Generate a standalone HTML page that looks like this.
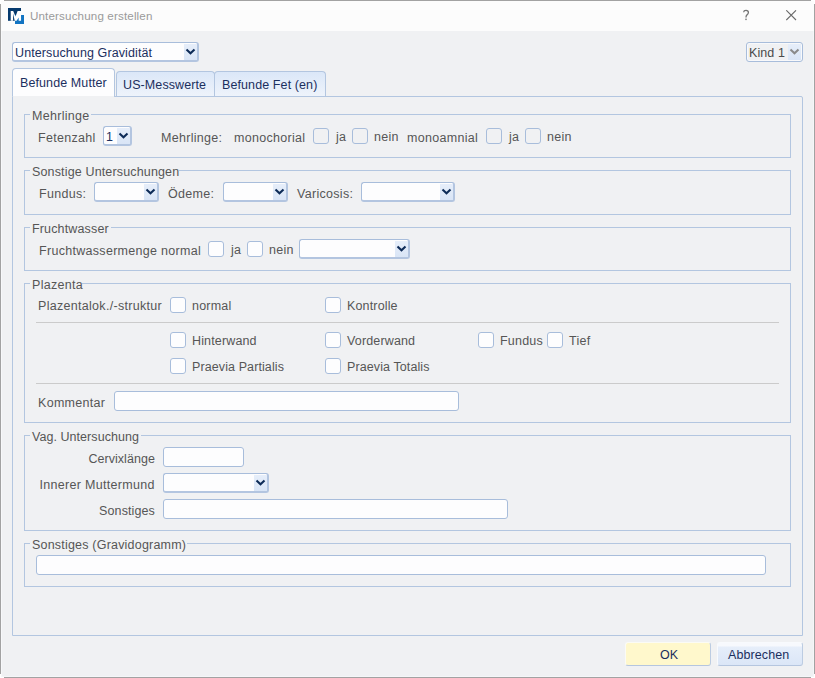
<!DOCTYPE html>
<html><head><meta charset="utf-8"><style>
html,body{margin:0;padding:0;}
body{width:815px;height:678px;position:relative;overflow:hidden;background:#ffffff;font-family:"Liberation Sans",sans-serif;}
.t{position:absolute;white-space:nowrap;line-height:15px;}
</style></head><body>
<div style="position:absolute;left:4px;top:0;width:807px;height:1px;background:#a2a2a2"></div>
<div style="position:absolute;left:4px;top:677px;width:807px;height:1px;background:#a2a2a2"></div>
<div style="position:absolute;left:0;top:4px;width:1px;height:670px;background:#a2a2a2"></div>
<div style="position:absolute;left:814px;top:4px;width:1px;height:670px;background:#a2a2a2"></div>
<div style="position:absolute;left:1px;top:1px;width:813px;height:30px;box-sizing:border-box;background:#fcfcfc;"></div>
<div style="position:absolute;left:1px;top:31px;width:813px;height:646px;box-sizing:border-box;background:#f0f1f3;box-shadow:inset 1px 0 #f7f8fa, inset -1px 0 #f5f6f8, inset 0 -1px #f5f6f8;"></div>
<svg style="position:absolute;left:8px;top:8px" width="17" height="17" viewBox="0 0 17 17">
<rect x="0" y="0" width="13" height="12.8" fill="#063a6e"/>
<rect x="7" y="7" width="9" height="9" fill="#1274c2"/>
<polygon points="2.72,12.75 2.72,3.01 5.2,3.01 7.5,8.6 9.6,3.01 13.04,3.01 13.04,12.75 10.68,12.75 10.68,9.6 8.6,12.75 6.7,12.75 5.08,5.6 5.08,12.75" fill="#ffffff"/>
</svg>
<div class="t" style="left:30px;top:7.94px;font-size:11.6px;color:#9a9a9a;letter-spacing:0.15px;">Untersuchung erstellen</div>
<svg style="position:absolute;left:740px;top:8px" width="12" height="14"><path d="M3.6 4.2 Q3.8 2.4 6 2.4 Q8.4 2.4 8.4 4.6 Q8.4 6 7 6.9 Q6 7.6 6 9.2 V9.6" fill="none" stroke="#747474" stroke-width="1.3"/><rect x="5.3" y="10.6" width="1.4" height="1.5" fill="#747474"/></svg>
<svg style="position:absolute;left:786px;top:10px" width="11" height="11"><path d="M0.3 0.3 L10 10 M10 0.3 L0.3 10" stroke="#6a6a6a" stroke-width="1.1"/></svg>
<div style="position:absolute;left:12px;top:42px;width:187px;height:20px;box-sizing:border-box;border:1px solid #a8bddb;border-right:2px solid #b3c5e0;border-bottom:2px solid #b3c5e0;border-radius:3px;background:#fdfdfe;"></div>
<div style="position:absolute;left:184px;top:44px;width:13px;height:16px;box-sizing:border-box;background:linear-gradient(#e6eefa,#d9e5f6);"></div>
<svg style="position:absolute;left:185px;top:48px" width="11" height="7.2"><path d="M1.5 1.5 L5.5 5.2 L9.5 1.5" fill="none" stroke="#0d2b57" stroke-width="2.1" stroke-linecap="butt" stroke-linejoin="miter"/></svg>
<div class="t" style="left:15px;top:46.28px;font-size:12.5px;color:#1b2f5e;letter-spacing:0.1px;">Untersuchung Gravidität</div>
<div style="position:absolute;left:746px;top:42px;width:57px;height:20px;box-sizing:border-box;border:1px solid #a8bddb;border-radius:3px;background:#f0f1f3;box-shadow:inset 0 0 0 1px #f8f9fb;"></div>
<div style="position:absolute;left:788px;top:44px;width:13px;height:16px;box-sizing:border-box;background:linear-gradient(#e6eefa,#d9e5f6);"></div>
<svg style="position:absolute;left:789px;top:48px" width="11" height="7.2"><path d="M1.5 1.5 L5.5 5.2 L9.5 1.5" fill="none" stroke="#8a8a8a" stroke-width="2.1" stroke-linecap="butt" stroke-linejoin="miter"/></svg>
<div class="t" style="left:749px;top:46.28px;font-size:12.5px;color:#4a4a4a;letter-spacing:0.1px;">Kind 1</div>
<div style="position:absolute;left:12px;top:96px;width:791px;height:540px;box-sizing:border-box;border:1px solid #b3c6e0;border-top-right-radius:2px;background:#f0f1f3;"></div>
<div style="position:absolute;left:116px;top:71px;width:99px;height:25px;box-sizing:border-box;border:1px solid #b3c6e0;border-bottom:none;border-radius:4px 4px 0 0;background:linear-gradient(#dbe7f8,#eef3fb)"></div>
<div style="position:absolute;left:214px;top:71px;width:112px;height:25px;box-sizing:border-box;border:1px solid #b3c6e0;border-bottom:none;border-radius:4px 4px 0 0;background:linear-gradient(#dbe7f8,#eef3fb)"></div>
<div style="position:absolute;left:12px;top:68px;width:103px;height:28px;box-sizing:border-box;border:1px solid #b3c6e0;border-bottom:none;border-radius:4px 4px 0 0;background:#fdfdfe"></div>
<div style="position:absolute;left:13px;top:96px;width:101px;height:1px;box-sizing:border-box;background:#f0f1f3;"></div>
<div class="t" style="left:20px;top:76.28px;font-size:12.5px;color:#1b2f5e;letter-spacing:0.1px;">Befunde Mutter</div>
<div class="t" style="left:123px;top:78.28px;font-size:12.5px;color:#1b2f5e;letter-spacing:0.1px;">US-Messwerte</div>
<div class="t" style="left:222px;top:78.28px;font-size:12.5px;color:#1b2f5e;letter-spacing:0.1px;">Befunde Fet (en)</div>
<div style="position:absolute;left:24px;top:114px;width:767px;height:44px;box-sizing:border-box;border:1px solid #b3c6e0;"></div>
<div style="position:absolute;left:30px;top:114px;width:61px;height:1px;box-sizing:border-box;background:#f0f1f3;"></div>
<div class="t" style="left:32px;top:109.28px;font-size:12.5px;color:#565656;letter-spacing:0.3px;">Mehrlinge</div>
<div class="t" style="left:38px;top:131.28px;font-size:12.5px;color:#565656;letter-spacing:0.3px;">Fetenzahl</div>
<div style="position:absolute;left:103px;top:126px;width:29px;height:20px;box-sizing:border-box;border:1px solid #a8bddb;border-right:2px solid #b3c5e0;border-bottom:2px solid #b3c5e0;border-radius:3px;background:#fdfdfe;"></div>
<div style="position:absolute;left:117px;top:128px;width:13px;height:16px;box-sizing:border-box;background:linear-gradient(#e6eefa,#d9e5f6);"></div>
<svg style="position:absolute;left:118px;top:132px" width="11" height="7.2"><path d="M1.5 1.5 L5.5 5.2 L9.5 1.5" fill="none" stroke="#0d2b57" stroke-width="2.1" stroke-linecap="butt" stroke-linejoin="miter"/></svg>
<div class="t" style="left:106px;top:130.28px;font-size:12.5px;color:#1b2f5e;letter-spacing:0.1px;">1</div>
<div class="t" style="left:161px;top:131.28px;font-size:12.5px;color:#565656;letter-spacing:0.3px;">Mehrlinge:</div>
<div class="t" style="left:234px;top:131.28px;font-size:12.5px;color:#565656;letter-spacing:0.3px;">monochorial</div>
<div style="position:absolute;left:313px;top:128px;width:16px;height:16px;box-sizing:border-box;border:1px solid #a8bddb;border-radius:3px;background:transparent;"></div>
<div class="t" style="left:336px;top:130.28px;font-size:12.5px;color:#565656;letter-spacing:0.3px;">ja</div>
<div style="position:absolute;left:352px;top:128px;width:16px;height:16px;box-sizing:border-box;border:1px solid #a8bddb;border-radius:3px;background:transparent;"></div>
<div class="t" style="left:374px;top:130.28px;font-size:12.5px;color:#565656;letter-spacing:0.3px;">nein</div>
<div class="t" style="left:407px;top:131.28px;font-size:12.5px;color:#565656;letter-spacing:0.3px;">monoamnial</div>
<div style="position:absolute;left:486px;top:128px;width:16px;height:16px;box-sizing:border-box;border:1px solid #a8bddb;border-radius:3px;background:transparent;"></div>
<div class="t" style="left:509px;top:130.28px;font-size:12.5px;color:#565656;letter-spacing:0.3px;">ja</div>
<div style="position:absolute;left:525px;top:128px;width:16px;height:16px;box-sizing:border-box;border:1px solid #a8bddb;border-radius:3px;background:transparent;"></div>
<div class="t" style="left:547px;top:130.28px;font-size:12.5px;color:#565656;letter-spacing:0.3px;">nein</div>
<div style="position:absolute;left:24px;top:170px;width:767px;height:45px;box-sizing:border-box;border:1px solid #b3c6e0;"></div>
<div style="position:absolute;left:30px;top:170px;width:149px;height:1px;box-sizing:border-box;background:#f0f1f3;"></div>
<div class="t" style="left:32px;top:165.28px;font-size:12.5px;color:#565656;letter-spacing:0.15px;">Sonstige Untersuchungen</div>
<div class="t" style="left:39px;top:187.28px;font-size:12.5px;color:#565656;letter-spacing:0.3px;">Fundus:</div>
<div style="position:absolute;left:94px;top:182px;width:65px;height:20px;box-sizing:border-box;border:1px solid #a8bddb;border-right:2px solid #b3c5e0;border-bottom:2px solid #b3c5e0;border-radius:3px;background:#fdfdfe;"></div>
<div style="position:absolute;left:144px;top:184px;width:13px;height:16px;box-sizing:border-box;background:linear-gradient(#e6eefa,#d9e5f6);"></div>
<svg style="position:absolute;left:145px;top:188px" width="11" height="7.2"><path d="M1.5 1.5 L5.5 5.2 L9.5 1.5" fill="none" stroke="#0d2b57" stroke-width="2.1" stroke-linecap="butt" stroke-linejoin="miter"/></svg>
<div class="t" style="left:168px;top:187.28px;font-size:12.5px;color:#565656;letter-spacing:0.3px;">Ödeme:</div>
<div style="position:absolute;left:223px;top:182px;width:65px;height:20px;box-sizing:border-box;border:1px solid #a8bddb;border-right:2px solid #b3c5e0;border-bottom:2px solid #b3c5e0;border-radius:3px;background:#fdfdfe;"></div>
<div style="position:absolute;left:273px;top:184px;width:13px;height:16px;box-sizing:border-box;background:linear-gradient(#e6eefa,#d9e5f6);"></div>
<svg style="position:absolute;left:274px;top:188px" width="11" height="7.2"><path d="M1.5 1.5 L5.5 5.2 L9.5 1.5" fill="none" stroke="#0d2b57" stroke-width="2.1" stroke-linecap="butt" stroke-linejoin="miter"/></svg>
<div class="t" style="left:297px;top:187.28px;font-size:12.5px;color:#565656;letter-spacing:0.3px;">Varicosis:</div>
<div style="position:absolute;left:361px;top:182px;width:94px;height:20px;box-sizing:border-box;border:1px solid #a8bddb;border-right:2px solid #b3c5e0;border-bottom:2px solid #b3c5e0;border-radius:3px;background:#fdfdfe;"></div>
<div style="position:absolute;left:440px;top:184px;width:13px;height:16px;box-sizing:border-box;background:linear-gradient(#e6eefa,#d9e5f6);"></div>
<svg style="position:absolute;left:441px;top:188px" width="11" height="7.2"><path d="M1.5 1.5 L5.5 5.2 L9.5 1.5" fill="none" stroke="#0d2b57" stroke-width="2.1" stroke-linecap="butt" stroke-linejoin="miter"/></svg>
<div style="position:absolute;left:24px;top:227px;width:767px;height:44px;box-sizing:border-box;border:1px solid #b3c6e0;"></div>
<div style="position:absolute;left:30px;top:227px;width:81px;height:1px;box-sizing:border-box;background:#f0f1f3;"></div>
<div class="t" style="left:32px;top:222.28px;font-size:12.5px;color:#565656;letter-spacing:0.15px;">Fruchtwasser</div>
<div class="t" style="left:39px;top:244.28px;font-size:12.5px;color:#565656;letter-spacing:0.3px;">Fruchtwassermenge normal</div>
<div style="position:absolute;left:208px;top:241px;width:16px;height:16px;box-sizing:border-box;border:1px solid #a8bddb;border-radius:3px;background:#fdfdfe;"></div>
<div class="t" style="left:231px;top:243.28px;font-size:12.5px;color:#565656;letter-spacing:0.3px;">ja</div>
<div style="position:absolute;left:247px;top:241px;width:16px;height:16px;box-sizing:border-box;border:1px solid #a8bddb;border-radius:3px;background:#fdfdfe;"></div>
<div class="t" style="left:269px;top:243.28px;font-size:12.5px;color:#565656;letter-spacing:0.3px;">nein</div>
<div style="position:absolute;left:299px;top:239px;width:111px;height:20px;box-sizing:border-box;border:1px solid #a8bddb;border-right:2px solid #b3c5e0;border-bottom:2px solid #b3c5e0;border-radius:3px;background:#fdfdfe;"></div>
<div style="position:absolute;left:395px;top:241px;width:13px;height:16px;box-sizing:border-box;background:linear-gradient(#e6eefa,#d9e5f6);"></div>
<svg style="position:absolute;left:396px;top:245px" width="11" height="7.2"><path d="M1.5 1.5 L5.5 5.2 L9.5 1.5" fill="none" stroke="#0d2b57" stroke-width="2.1" stroke-linecap="butt" stroke-linejoin="miter"/></svg>
<div style="position:absolute;left:24px;top:283px;width:767px;height:140px;box-sizing:border-box;border:1px solid #b3c6e0;"></div>
<div style="position:absolute;left:30px;top:283px;width:52px;height:1px;box-sizing:border-box;background:#f0f1f3;"></div>
<div class="t" style="left:32px;top:278.28px;font-size:12.5px;color:#565656;letter-spacing:0.3px;">Plazenta</div>
<div class="t" style="left:38px;top:299.28px;font-size:12.5px;color:#565656;letter-spacing:0.3px;">Plazentalok./-struktur</div>
<div style="position:absolute;left:170px;top:297px;width:16px;height:16px;box-sizing:border-box;border:1px solid #a8bddb;border-radius:3px;background:#fdfdfe;"></div>
<div class="t" style="left:192px;top:299.28px;font-size:12.5px;color:#565656;letter-spacing:0.2px;">normal</div>
<div style="position:absolute;left:325px;top:297px;width:16px;height:16px;box-sizing:border-box;border:1px solid #a8bddb;border-radius:3px;background:#fdfdfe;"></div>
<div class="t" style="left:347px;top:299.28px;font-size:12.5px;color:#565656;letter-spacing:0.15px;">Kontrolle</div>
<div style="position:absolute;left:36px;top:322px;width:743px;height:1px;box-sizing:border-box;background:#cbcbcb;"></div>
<div style="position:absolute;left:170px;top:332px;width:16px;height:16px;box-sizing:border-box;border:1px solid #a8bddb;border-radius:3px;background:#fdfdfe;"></div>
<div class="t" style="left:192px;top:334.28px;font-size:12.5px;color:#565656;letter-spacing:0.15px;">Hinterwand</div>
<div style="position:absolute;left:325px;top:332px;width:16px;height:16px;box-sizing:border-box;border:1px solid #a8bddb;border-radius:3px;background:#fdfdfe;"></div>
<div class="t" style="left:347px;top:334.28px;font-size:12.5px;color:#565656;letter-spacing:0.15px;">Vorderwand</div>
<div style="position:absolute;left:478px;top:332px;width:16px;height:16px;box-sizing:border-box;border:1px solid #a8bddb;border-radius:3px;background:#fdfdfe;"></div>
<div class="t" style="left:500px;top:334.28px;font-size:12.5px;color:#565656;letter-spacing:0.2px;">Fundus</div>
<div style="position:absolute;left:547px;top:332px;width:16px;height:16px;box-sizing:border-box;border:1px solid #a8bddb;border-radius:3px;background:#fdfdfe;"></div>
<div class="t" style="left:569px;top:334.28px;font-size:12.5px;color:#565656;letter-spacing:0.3px;">Tief</div>
<div style="position:absolute;left:170px;top:358px;width:16px;height:16px;box-sizing:border-box;border:1px solid #a8bddb;border-radius:3px;background:#fdfdfe;"></div>
<div class="t" style="left:192px;top:360.28px;font-size:12.5px;color:#565656;letter-spacing:0.1px;">Praevia Partialis</div>
<div style="position:absolute;left:325px;top:358px;width:16px;height:16px;box-sizing:border-box;border:1px solid #a8bddb;border-radius:3px;background:#fdfdfe;"></div>
<div class="t" style="left:347px;top:360.28px;font-size:12.5px;color:#565656;letter-spacing:0.1px;">Praevia Totalis</div>
<div style="position:absolute;left:36px;top:383px;width:743px;height:1px;box-sizing:border-box;background:#cbcbcb;"></div>
<div class="t" style="left:38px;top:396.28px;font-size:12.5px;color:#565656;letter-spacing:0.3px;">Kommentar</div>
<div style="position:absolute;left:114px;top:391px;width:345px;height:20px;box-sizing:border-box;border:1px solid #a8bddb;border-radius:3px;background:#fdfdfe;"></div>
<div style="position:absolute;left:24px;top:435px;width:767px;height:96px;box-sizing:border-box;border:1px solid #b3c6e0;"></div>
<div style="position:absolute;left:30px;top:435px;width:111px;height:1px;box-sizing:border-box;background:#f0f1f3;"></div>
<div class="t" style="left:32px;top:430.28px;font-size:12.5px;color:#565656;letter-spacing:0.05px;">Vag. Untersuchung</div>
<div class="t" style="right:660.05px;top:452.28px;font-size:12.5px;color:#565656;letter-spacing:0.05px;text-align:right">Cervixlänge</div>
<div style="position:absolute;left:163px;top:447px;width:81px;height:20px;box-sizing:border-box;border:1px solid #a8bddb;border-radius:3px;background:#fdfdfe;"></div>
<div class="t" style="right:660.3px;top:478.28px;font-size:12.5px;color:#565656;letter-spacing:0.3px;text-align:right">Innerer Muttermund</div>
<div style="position:absolute;left:163px;top:473px;width:106px;height:20px;box-sizing:border-box;border:1px solid #a8bddb;border-right:2px solid #b3c5e0;border-bottom:2px solid #b3c5e0;border-radius:3px;background:#fdfdfe;"></div>
<div style="position:absolute;left:254px;top:475px;width:13px;height:16px;box-sizing:border-box;background:linear-gradient(#e6eefa,#d9e5f6);"></div>
<svg style="position:absolute;left:255px;top:479px" width="11" height="7.2"><path d="M1.5 1.5 L5.5 5.2 L9.5 1.5" fill="none" stroke="#0d2b57" stroke-width="2.1" stroke-linecap="butt" stroke-linejoin="miter"/></svg>
<div class="t" style="right:660.1px;top:504.28px;font-size:12.5px;color:#565656;letter-spacing:0.1px;text-align:right">Sonstiges</div>
<div style="position:absolute;left:163px;top:499px;width:345px;height:20px;box-sizing:border-box;border:1px solid #a8bddb;border-radius:3px;background:#fdfdfe;"></div>
<div style="position:absolute;left:24px;top:543px;width:767px;height:44px;box-sizing:border-box;border:1px solid #b3c6e0;"></div>
<div style="position:absolute;left:30px;top:543px;width:157px;height:1px;box-sizing:border-box;background:#f0f1f3;"></div>
<div class="t" style="left:32px;top:538.28px;font-size:12.5px;color:#565656;letter-spacing:0.2px;">Sonstiges (Gravidogramm)</div>
<div style="position:absolute;left:36px;top:555px;width:730px;height:20px;box-sizing:border-box;border:1px solid #a8bddb;border-radius:3px;background:#fdfdfe;"></div>
<div style="position:absolute;left:625px;top:642px;width:86px;height:24px;box-sizing:border-box;border:1px solid #fbfbf5;border-bottom-color:#b5c6df;border-right-color:#bccce2;border-radius:3px;background:#fff8cc;"></div>
<div class="t" style="left:660px;top:648.28px;font-size:12.5px;color:#1b2f5e;letter-spacing:0.1px;">OK</div>
<div style="position:absolute;left:717px;top:642px;width:86px;height:24px;box-sizing:border-box;border:1px solid #f8fafd;border-bottom-color:#b5c6df;border-right-color:#bccce2;border-radius:3px;background:linear-gradient(#f7f9fd 0,#f7f9fd 3px,#e6eefa 4px,#dbe6f7 100%);"></div>
<div class="t" style="left:728px;top:648.28px;font-size:12.5px;color:#1b2f5e;letter-spacing:0.1px;">Abbrechen</div>
</body></html>
